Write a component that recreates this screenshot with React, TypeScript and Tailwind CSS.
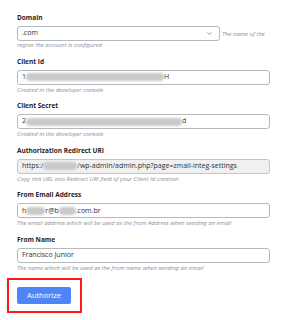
import { ChevronDown } from 'lucide-react'

const font = { fontFamily: '"Open Sans", "Liberation Sans", sans-serif' }

// blurred-out part of a value
const Blur = ({ w }: { w: number }) => (
  <span className="inline-block h-[8px] align-middle bg-[#c9c9c9] blur-[1.2px] rounded-sm" style={{ width: w }} />
)

const Label = ({ children }: { children: React.ReactNode }) => (
  <div className="text-[6.5px] leading-[8px] font-bold text-[#1d2327]">{children}</div>
)

const Help = ({ children }: { children: React.ReactNode }) => (
  <div className="mt-px text-[6px] leading-[8px] italic text-[#8c8f94]">{children}</div>
)

const Input = ({ children, readOnly }: { children: React.ReactNode; readOnly?: boolean }) => (
  <div
    className={`mt-1 h-[15px] flex items-center px-[4px] rounded-[3px] border text-[7px] text-[#2c3338] whitespace-nowrap overflow-hidden ${
      readOnly ? 'bg-[#f0f0f1] border-[#c3c4c7]' : 'bg-white border-[#b4b9be]'
    }`}
  >
    {children}
  </div>
)

export default function App() {
  return (
    <div className="w-[292px] h-[320px] bg-white pt-[14px] pl-[17px] pr-[22px]" style={font}>
      <div className="flex flex-col gap-[8.6px]">
        <div>
          <Label>Domain</Label>
          <div className="mt-1 flex items-center gap-[2px]">
            <div className="w-[203px] h-[15px] flex items-center justify-between pl-[4px] pr-[6px] rounded-[3px] border border-[#b4b9be] bg-white text-[7px] text-[#2c3338]">
              .com
              <ChevronDown size={7} strokeWidth={2} className="text-[#50575e]" />
            </div>
            <span className="text-[6px] leading-[8px] italic text-[#8c8f94]">The name of the</span>
          </div>
          <div className="text-[6px] leading-[8px] italic text-[#8c8f94]">region the account is configured</div>
        </div>

        <div>
          <Label>Client Id</Label>
          <Input>
            1<Blur w={138} />H
          </Input>
          <Help>Created in the developer console</Help>
        </div>

        <div>
          <Label>Client Secret</Label>
          <Input>
            2<Blur w={156} />d
          </Input>
          <Help>Created in the developer console</Help>
        </div>

        <div>
          <Label>Authorization Redirect URI</Label>
          <Input readOnly>
            https:/<Blur w={34} />/wp-admin/admin.php?page=zmail-integ-settings
          </Input>
          <Help>Copy this URL into Redirect URI field of your Client Id creation</Help>
        </div>

        <div>
          <Label>From Email Address</Label>
          <Input>
            h<Blur w={19} />r@b<Blur w={17} />.com.br
          </Input>
          <Help>The email address which will be used as the from Address when sending an email</Help>
        </div>

        <div>
          <Label>From Name</Label>
          <Input>Francisco Junior</Input>
          <Help>The name which will be used as the from name when sending an email</Help>
        </div>
      </div>

      <div className="mt-[6px] -ml-[10px] w-[75px] h-[35px] border-2 border-[#ff1a1a] flex items-center pl-[8px]">
        <button className="w-[54px] h-[17px] bg-[#4f86f7] text-white text-[7.5px] rounded-[2px]">Authorize</button>
      </div>
    </div>
  )
}
